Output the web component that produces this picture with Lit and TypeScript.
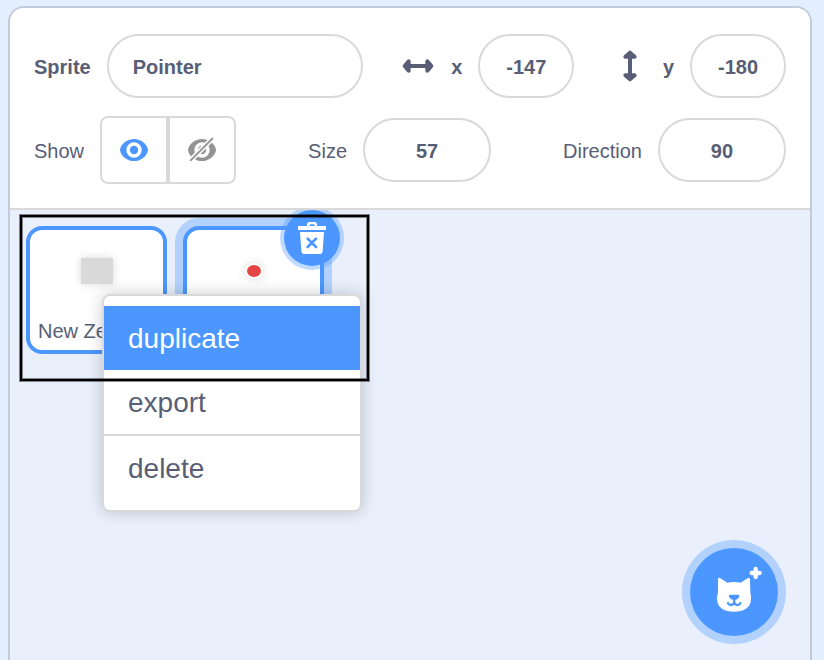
import { LitElement, html, svg, css } from "lit";
import { customElement, state } from "lit/decorators.js";
import { classMap } from "lit/directives/class-map.js";

const eyeShape = svg`
  <path fill-rule="evenodd" d="M42 0C61 0 76 12 82 25Q86 33 82 41C76 54 61 66 42 66S8 54 2 41Q-2 33 2 25C8 12 23 0 42 0Z
    M42 10A23 23 0 1 0 42 56A23 23 0 1 0 42 10Z"></path>
  <circle cx="42" cy="33" r="12.5"></circle>`;

const arrow = svg`
  <path d="M22 24H74" stroke-width="12"></path>
  <path d="M8 24L20 10V38Z M88 24L76 10V38Z" stroke-width="12" stroke-linejoin="round"
    fill="currentColor"></path>`;

@customElement("app-root")
export class AppRoot extends LitElement {
  @state() private visible = true;
  @state() private active = "duplicate";

  static styles = css`
    :host {
      --blue: #4c97ff;
      --halo: rgba(76, 151, 255, 0.35);
      --text: #575e75;
      --line: #d9d9d9;
      display: block;
      box-sizing: border-box;
      min-height: 100vh;
      padding: 6px 12px 0 8px;
      background: #e3effe;
      color: var(--text);
      font: 20px/24px "Liberation Sans", Arial, sans-serif;
    }
    * {
      box-sizing: border-box;
    }
    button,
    input {
      margin: 0;
      font: inherit;
      color: inherit;
    }
    button {
      padding: 0;
      cursor: pointer;
    }
    svg {
      display: block;
    }
    .pane {
      display: flex;
      flex-direction: column;
      min-height: calc(100vh - 6px);
      border: 2px solid #c3cbd9;
      border-bottom: 0;
      border-radius: 16px 16px 0 0;
      background: #e9f0fc;
      overflow: hidden;
    }
    .info {
      display: flex;
      flex-direction: column;
      gap: 18px;
      padding: 26px 24px 24px;
      background: #fff;
      border-bottom: 2px solid var(--line);
    }
    .row {
      display: flex;
      align-items: center;
      justify-content: space-between;
    }
    .group {
      display: flex;
      align-items: center;
      gap: 16px;
    }
    .caption {
      padding-top: 2px;
    }
    .strong {
      font-weight: bold;
    }
    .axis {
      min-width: 12px;
      text-align: right;
    }
    .field {
      height: 64px;
      border: 2px solid var(--line);
      border-radius: 32px;
      padding: 2px 8px 0;
      background: #fff;
      font-weight: bold;
      text-align: center;
      outline: none;
    }
    .field:focus {
      border-color: var(--blue);
    }
    .name {
      width: 256px;
      padding: 2px 24px 0;
      text-align: left;
    }
    .small {
      width: 96px;
    }
    .medium {
      width: 128px;
    }
    .arrow {
      width: 32px;
      height: 32px;
      fill: none;
      stroke: currentColor;
    }
    .toggle {
      display: flex;
    }
    .eye {
      display: grid;
      place-items: center;
      width: 68px;
      height: 68px;
      border: 2px solid var(--line);
      border-radius: 8px 0 0 8px;
      background: #fff;
      color: #949494;
    }
    .eye:last-child {
      border-radius: 0 8px 8px 0;
    }
    .eye.on {
      color: var(--blue);
    }
    .eye svg {
      width: 32px;
      height: 26px;
      fill: currentColor;
    }
    .area {
      position: relative;
      flex: 1;
      overflow: hidden;
      padding: 16px;
    }
    .list {
      display: flex;
      gap: 16px;
      margin: 0;
      padding: 0;
      list-style: none;
    }
    .item {
      position: relative;
      width: 141px;
    }
    .card {
      display: flex;
      flex-direction: column;
      align-items: center;
      gap: 6px;
      width: 100%;
      height: 128px;
      padding: 0 8px 8px;
      border: 4px solid var(--blue);
      border-radius: 16px;
      background: #fff;
    }
    .card.selected {
      box-shadow: 0 0 0 8px var(--halo);
    }
    .thumb {
      display: grid;
      place-items: center;
      flex: 1;
    }
    .thumb svg {
      overflow: visible;
      filter: drop-shadow(0 0 4px rgba(0, 0, 0, 0.15));
    }
    .label {
      width: 100%;
      height: 24px;
      line-height: 26px;
      overflow: hidden;
      text-align: left;
      white-space: nowrap;
    }
    .trash {
      position: absolute;
      top: -16px;
      right: -16px;
      display: grid;
      place-items: center;
      width: 56px;
      height: 56px;
      border: 0;
      border-radius: 50%;
      background: var(--blue);
      box-shadow: 0 0 0 4px var(--halo);
    }
    .menu {
      position: absolute;
      top: 84px;
      left: 92px;
      width: 260px;
      padding: 10px 0;
      border: 2px solid var(--line);
      border-radius: 8px;
      background: #fff;
      box-shadow: 0 0 16px rgba(0, 0, 0, 0.2);
    }
    .entry {
      display: block;
      width: 100%;
      height: 64px;
      padding: 2px 24px 0;
      border: 0;
      background: none;
      font-size: 28px;
      line-height: 32px;
      text-align: left;
    }
    .entry.current {
      background: var(--blue);
      color: #fff;
    }
    .entry.ruled {
      height: 66px;
      border-top: 2px solid var(--line);
    }
    .marker {
      position: absolute;
      top: 5px;
      left: 10px;
      width: 349px;
      height: 166px;
      border: 2px solid #000;
      box-shadow:
        0 0 0 1px rgba(0, 0, 0, 0.45),
        inset 0 0 0 1px rgba(0, 0, 0, 0.45);
      pointer-events: none;
    }
    .add {
      position: absolute;
      right: 32px;
      bottom: 24px;
      width: 88px;
      height: 88px;
      border: 0;
      border-radius: 50%;
      background: var(--blue);
      box-shadow: 0 0 0 8px var(--halo);
    }
  `;

  private entry(name: string, ruled = false) {
    return html`<button
      role="menuitem"
      class=${classMap({ entry: true, current: this.active === name, ruled })}
      @mouseenter=${() => (this.active = name)}
    >${name}</button>`;
  }

  render() {
    return html`
      <main class="pane">
        <section class="info" aria-label="Sprite properties">
          <div class="row">
            <div class="group">
              <label class="caption strong" for="name">Sprite</label>
              <input class="field name" id="name" type="text" .value=${"Pointer"} />
            </div>
            <div class="group">
              <svg class="arrow" viewBox="0 -24 96 96" aria-hidden="true">${arrow}</svg>
              <label class="caption strong axis" for="x">x</label>
              <input class="field small" id="x" type="text" .value=${"-147"} />
            </div>
            <div class="group">
              <svg class="arrow" viewBox="0 -24 96 96" aria-hidden="true">
                <g transform="rotate(90 48 24)">${arrow}</g>
              </svg>
              <label class="caption strong axis" for="y">y</label>
              <input class="field small" id="y" type="text" .value=${"-180"} />
            </div>
          </div>
          <div class="row">
            <div class="group">
              <span class="caption" id="show">Show</span>
              <div class="toggle" role="group" aria-labelledby="show">
                <button
                  class=${classMap({ eye: true, on: this.visible })}
                  aria-label="Show sprite"
                  @click=${() => (this.visible = true)}
                >
                  <svg viewBox="-6 -6 96 78">${eyeShape}</svg>
                </button>
                <button
                  class=${classMap({ eye: true, on: !this.visible })}
                  aria-label="Hide sprite"
                  @click=${() => (this.visible = false)}
                >
                  <svg viewBox="-6 -6 96 78">
                    ${eyeShape}
                    <path d="M5 67L77 -5" stroke="#fff" stroke-width="15"></path>
                    <path d="M8 64L73 -1" stroke="currentColor" stroke-width="6" stroke-linecap="round"></path>
                  </svg>
                </button>
              </div>
            </div>
            <div class="group">
              <label class="caption" for="size">Size</label>
              <input class="field medium" id="size" type="text" .value=${"57"} />
            </div>
            <div class="group">
              <label class="caption" for="direction">Direction</label>
              <input class="field medium" id="direction" type="text" .value=${"90"} />
            </div>
          </div>
        </section>

        <section class="area" aria-label="Sprites">
          <ul class="list">
            <li class="item">
              <button class="card">
                <span class="thumb">
                  <svg width="32" height="26"><rect width="32" height="26" fill="#d9d9d9"></rect></svg>
                </span>
                <span class="label">New Ze…</span>
              </button>
            </li>
            <li class="item">
              <button class="card selected" aria-label="Pointer">
                <span class="thumb">
                  <svg width="18" height="16">
                    <ellipse cx="9" cy="8" rx="8" ry="7" fill="#e64545" stroke="#fff" stroke-width="2"></ellipse>
                  </svg>
                </span>
                <span class="label"></span>
              </button>
              <button class="trash" aria-label="Delete sprite">
                <svg width="28" height="32" viewBox="0 0 84 96">
                  <path
                    fill="#fff"
                    d="M2 12H27V8Q27 0 35 0H49Q57 0 57 8V12H82Q84 12 84 14V24H0V14Q0 12 2 12ZM35 12H50V9Q50 7 48 7H37Q35 7 35 9Z"
                    fill-rule="evenodd"
                  ></path>
                  <path fill="#fff" d="M6 30H78L74 86Q73 96 64 96H20Q11 96 10 86Z"></path>
                  <path d="M29 50L54 75M54 50L29 75" stroke="#4c97ff" stroke-width="8" stroke-linecap="round"></path>
                </svg>
              </button>
            </li>
          </ul>

          <div class="menu" role="menu">
            ${this.entry("duplicate")} ${this.entry("export")} ${this.entry("delete", true)}
          </div>
          <div class="marker"></div>

          <button class="add" aria-label="Choose a sprite">
            <svg width="88" height="88" viewBox="60 54 264 264" fill="none" stroke-linecap="round">
              <path
                fill="#fff"
                d="M144 147Q145 141 150 144L172 158Q192 154 212 158L234 144Q239 141 240 148L241 188Q243 194 243 206C243 232 222 245 192 245S141 232 141 206Q141 194 144 188Z"
              ></path>
              <path
                fill="#4c97ff"
                d="M181 194H204Q210 194 208 200Q205 207 195 210H190Q180 207 177 200Q175 194 181 194Z"
              ></path>
              <path
                stroke="#4c97ff"
                stroke-width="7"
                d="M192.500 206V217M174 219Q176 225 182 225Q190 225 192.500 217Q195 225 203 225Q209 225 211 219"
              ></path>
              <path stroke="#fff" stroke-width="13" d="M257 117V141M245 129H269"></path>
            </svg>
          </button>
        </section>
      </main>
    `;
  }
}
